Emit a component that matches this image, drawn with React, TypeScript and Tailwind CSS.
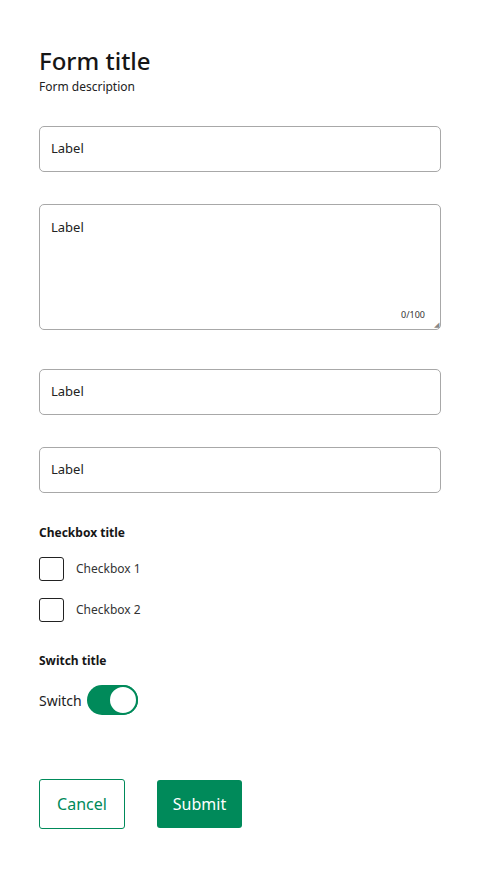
import React, { useState } from "react";

const font = { fontFamily: '"Noto Sans", Inter, Arial, sans-serif' };

const TextField: React.FC<{ label: string }> = ({ label }) => (
  <div className="h-[46px] w-full rounded-[5px] border border-[#a8a8a8] px-[11px] flex items-center">
    <span className="text-[13px] text-[#222]">{label}</span>
  </div>
);

const App: React.FC = () => {
  const [on, setOn] = useState(true);
  const [c1, setC1] = useState(false);
  const [c2, setC2] = useState(false);

  return (
    <div className="w-[480px] min-h-[878px] bg-white px-[39px] pt-[46px] text-[#1a1a1a]" style={font}>
      {/* Header */}
      <h1 className="text-[24px] font-medium leading-[30px] text-[#161616]">Form title</h1>
      <p className="mt-[3px] text-[12px] leading-[16px] text-[#222]">Form description</p>

      {/* Fields */}
      <div className="mt-[31px] flex flex-col">
        <TextField label="Label" />

        <div className="mt-[32px] relative h-[126px] w-full rounded-[5px] border border-[#a8a8a8] px-[11px] pt-[9px]">
          <span className="text-[13px] text-[#222]">Label</span>
          <span className="absolute right-[15px] bottom-[8px] text-[9px] text-[#333]">0/100</span>
          <span className="absolute right-[1px] bottom-[1px] text-[7px] leading-none text-[#888]">◢</span>
        </div>

        <div className="mt-[39px]">
          <TextField label="Label" />
        </div>
        <div className="mt-[32px]">
          <TextField label="Label" />
        </div>
      </div>

      {/* Checkboxes */}
      <div className="mt-[32px]">
        <h2 className="text-[12px] font-bold leading-[16px] text-[#161616]">Checkbox title</h2>
        <div className="mt-[16px] flex flex-col gap-[17px]">
          {[
            { label: "Checkbox 1", v: c1, set: setC1 },
            { label: "Checkbox 2", v: c2, set: setC2 },
          ].map((c) => (
            <label key={c.label} className="flex items-center gap-[12px] cursor-pointer">
              <button
                onClick={() => c.set(!c.v)}
                className={`h-[24px] w-[25px] rounded-[3px] border border-[#222] ${c.v ? "bg-[#008a5a]" : "bg-white"}`}
              />
              <span className="text-[12px] text-[#333]">{c.label}</span>
            </label>
          ))}
        </div>
      </div>

      {/* Switch */}
      <div className="mt-[31px]">
        <h2 className="text-[12px] font-bold leading-[16px] text-[#161616]">Switch title</h2>
        <div className="mt-[16px] flex items-center gap-[5px]">
          <span className="text-[14px] text-[#222]">Switch</span>
          <button
            onClick={() => setOn(!on)}
            className={`h-[30px] w-[51px] rounded-full flex items-center ${on ? "bg-[#008a5a] justify-end" : "bg-[#ccc] justify-start"}`}
          >
            <span className="h-[30px] w-[30px] rounded-full bg-white border-[2px] border-[#008a5a]" />
          </button>
        </div>
      </div>

      {/* Actions */}
      <div className="mt-[64px] flex items-center gap-[32px]">
        <button className="h-[50px] w-[86px] rounded-[3px] border border-[#008a5a] bg-white text-[16px] text-[#008a5a]">
          Cancel
        </button>
        <button className="h-[48px] w-[85px] rounded-[3px] bg-[#008a5a] text-[16px] text-white">
          Submit
        </button>
      </div>
    </div>
  );
};

export default App;
